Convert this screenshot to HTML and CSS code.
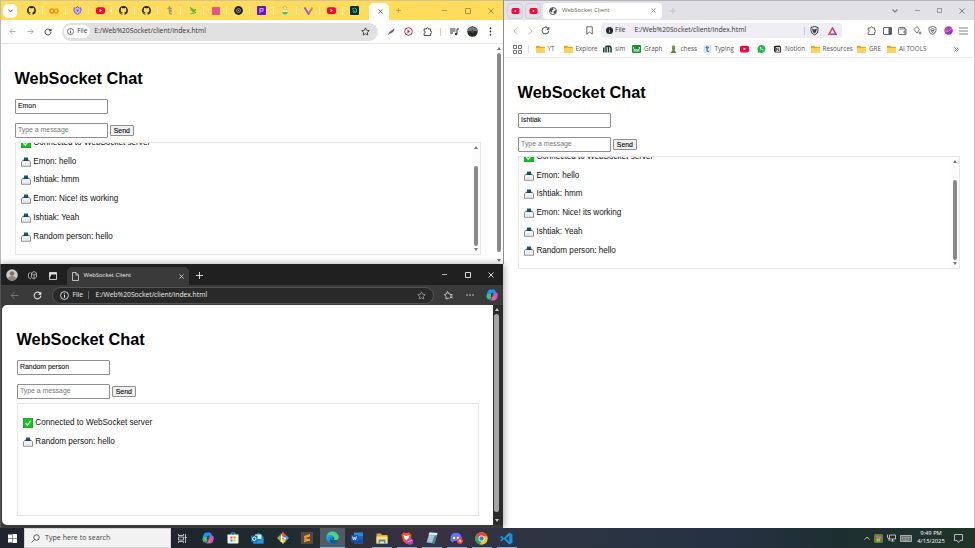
FILE: index.html
```html
<!DOCTYPE html>
<html lang="en">
<head>
<meta charset="utf-8">
<title>WebSocket Client</title>
<link rel="stylesheet" href="styles.css">
</head>
<body>
<svg class="defs" aria-hidden="true">
  <linearGradient id="g-edge" x1="0" y1="0" x2="1" y2="1"><stop offset="0" stop-color="#35c5ef"/><stop offset=".5" stop-color="#1490df"/><stop offset="1" stop-color="#0c5bb0"/></linearGradient>
  <linearGradient id="g-brave" x1="0" y1="0" x2="1" y2="0"><stop offset="0" stop-color="#ff4724"/><stop offset="1" stop-color="#8a2be2"/></linearGradient>
  <linearGradient id="g-vite" x1="0" y1="0" x2="1" y2="0"><stop offset="0" stop-color="#8d5cf6"/><stop offset=".5" stop-color="#a05ad8"/><stop offset="1" stop-color="#f29a26"/></linearGradient>
  <linearGradient id="g-orb" x1="0" y1="0" x2="1" y2="1"><stop offset="0" stop-color="#ff4d6d"/><stop offset=".5" stop-color="#a832c8"/><stop offset="1" stop-color="#5938e6"/></linearGradient>
  <symbol id="github" viewBox="0 0 16 16"><path fill="#222" fill-rule="evenodd" d="M8 0C3.6 0 0 3.6 0 8c0 3.5 2.3 6.500 5.500 7.600.4.1.5-.2.5-.4v-1.500c-2 .4-2.600-.5-2.700-.9-.1-.3-.5-.9-.8-1.100-.3-.2-.7-.6 0-.6s1.100.6 1.200.8c.7 1.200 1.900.9 2.300.7.1-.5.3-.9.500-1.100-1.800-.2-3.600-.9-3.600-4 0-.9.3-1.600.8-2.100-.1-.2-.4-1 .1-2.100 0 0 .7-.2 2.200.8a7.500 7.500 0 0 1 4 0c1.500-1 2.200-.8 2.200-.8.4 1.100.2 1.900.1 2.100.5.600.8 1.300.8 2.100 0 3.100-1.900 3.700-3.700 3.900.3.300.6.8.6 1.500v2.200c0 .2.1.5.5.4A8 8 0 0 0 8 0Z"/></symbol>
  <symbol id="youtube" viewBox="0 0 16 12"><rect width="16" height="12" rx="3.500" fill="#f03"/><path d="M6.200 3.300v5.400L11 6z" fill="#fff"/></symbol>
  <symbol id="left" viewBox="0 0 16 16"><path d="M15 8H2m6-6L2 8l6 6" fill="none" stroke="currentColor" stroke-width="1.700"/></symbol>
  <symbol id="right" viewBox="0 0 16 16"><path d="M1 8h13M8 2l6 6-6 6" fill="none" stroke="currentColor" stroke-width="1.700"/></symbol>
  <symbol id="reload" viewBox="0 0 16 16"><path d="M14 8a6 6 0 1 1-2-4.500L14 5.500" fill="none" stroke="currentColor" stroke-width="1.800"/><path d="M14.700 1v5.500H9.200z" fill="currentColor"/></symbol>
  <symbol id="info" viewBox="0 0 16 16"><circle cx="8" cy="8" r="7" fill="none" stroke="currentColor" stroke-width="1.500"/><path d="M8 7v5M8 3.800v1.800" stroke="currentColor" stroke-width="1.800"/></symbol>
  <symbol id="star" viewBox="0 0 16 16"><path d="m8 1.500 2 4.300 4.700.6-3.500 3.200.9 4.700L8 12l-4.100 2.300.9-4.700L1.300 6.400 6 5.800z" fill="none" stroke="currentColor" stroke-width="1.500"/></symbol>
  <symbol id="puzzle" viewBox="0 0 16 16"><path d="M2 3.500h4c-.4-3 4-3 3.600 0h3.900v4c3-.4 3 4 0 3.600v3.900H2v-4c2.800.3 2.800-3.900 0-3.600z" fill="none" stroke="currentColor" stroke-width="1.600"/></symbol>
  <symbol id="min" viewBox="0 0 12 12"><path d="M0 6h12" stroke="currentColor" stroke-width="1.700"/></symbol>
  <symbol id="max" viewBox="0 0 12 12"><path d="M1 1h10v10H1z" fill="none" stroke="currentColor" stroke-width="1.800"/></symbol>
  <symbol id="close" viewBox="0 0 12 12"><path d="m1 1 10 10M11 1 1 11" stroke="currentColor" stroke-width="1.800"/></symbol>
  <symbol id="plus" viewBox="0 0 12 12"><path d="M6 0v12M0 6h12" stroke="currentColor" stroke-width="1.500"/></symbol>
  <symbol id="chev" viewBox="0 0 12 8"><path d="m1 1 5 5 5-5" fill="none" stroke="currentColor" stroke-width="2.200"/></symbol>
  <symbol id="folder" viewBox="0 0 16 14"><path d="M0 2q0-1 1-1h4.500l2 2H15q1 0 1 1v9H0z" fill="#e9a820"/><path d="M0 5h16v7q0 1-1 1H1q-1 0-1-1z" fill="#ffd257"/></symbol>
  <symbol id="tray" viewBox="0 0 20 20"><path d="M3 7h14l2 3v8.500H1V10z" fill="#f5f5f5" stroke="#555" stroke-width="1.300"/><path d="M4 12.500h12M4 15h12" stroke="#ddd"/><path d="M6 1h8v7H6z" fill="#155a7c"/><path d="M5 5h10v3H5z" fill="#1a4359"/></symbol>
  <symbol id="check" viewBox="0 0 20 20"><rect x=".5" y=".5" width="19" height="19" fill="#0c1" stroke="#187018"/><path d="m5 10.500 3.500 4 7-9" fill="none" stroke="#fff" stroke-width="2.500"/></symbol>
  <symbol id="copilot" viewBox="0 0 20 20"><path d="M6 1h7q2 0 3 3l1 3h-4L9 15q-1 3-3 3Q1 18 1 12q1-10 5-11" fill="#1896e8"/><path d="M2 8q-3 8 3 8h3l2-7z" fill="#44c06b"/><path d="M14 19H7q2 0 3-3l3-8q1-2 3-2 4 0 3.500 5-1 8-5.500 8" fill="#d253c8"/><path d="M6 18h7l3-6-5 1-2 4z" fill="#ff6b52"/><path d="m9 7 3-1-2 7H8z" fill="#252b35"/></symbol>
</svg>

<main class="desktop">

<section class="window chrome">
  <div class="tabstrip">
    <div class="tabsearch"><svg width="5" height="4"><use href="#chev"/></svg></div>
    <div class="pinned"><svg width="9" height="9"><use href="#github"/></svg></div>
    <div class="pinned"><svg width="10" height="6" viewBox="0 0 20 12"><g fill="none" stroke-width="3"><circle cx="6" cy="6" r="4" stroke="#f08a00"/><circle cx="14" cy="6" r="4" stroke="#f79a10"/></g></svg></div>
    <div class="pinned"><svg width="9" height="9" viewBox="0 0 18 18"><path d="m9 1 3 3h4v5l-2 5-5 3-5-3-2-5V4h4z" fill="#bda9e8" stroke="#694bd1" stroke-width="2" stroke-dasharray="4 1"/><path d="m5 6 8 1-4 7z" fill="#6540d8" stroke="#fff"/></svg></div>
    <div class="pinned"><svg width="9" height="7"><use href="#youtube"/></svg></div>
    <div class="pinned"><svg width="9" height="9"><use href="#github"/></svg></div>
    <div class="pinned"><svg width="9" height="9"><use href="#github"/></svg></div>
    <div class="pinned"><svg width="6" height="9" viewBox="0 0 12 18"><path d="M5 0v13q0 3 5 3M1 5h9M5 10h5" fill="none" stroke="#a3987a" stroke-width="3"/></svg></div>
    <div class="pinned"><svg width="8" height="8" viewBox="0 0 16 16"><path d="m2 1 6 4-6 1m3 2 9-3-6 5 6 1-11 3" fill="none" stroke="#5bb83c" stroke-width="2.200"/></svg></div>
    <div class="pinned"><svg width="8" height="8" viewBox="0 0 16 16"><rect width="16" height="16" rx="1" fill="#ef5592"/><path d="M3 4h10M3 8h10M3 12h10" stroke="#d54781"/></svg></div>
    <div class="pinned"><svg width="9" height="9" viewBox="0 0 18 18"><circle cx="9" cy="9" r="8.800" fill="#222"/><circle cx="9" cy="9" r="4" fill="none" stroke="#aaa" stroke-width="1.500"/><circle cx="9" cy="9" r="1.500" fill="#aaa"/></svg></div>
    <div class="pinned"><svg width="9" height="9" viewBox="0 0 18 18"><rect width="18" height="18" rx="2" fill="#6510d8"/><path d="M6 15V5h6v5H7" fill="none" stroke="#c9a9ff" stroke-width="2.200"/></svg></div>
    <div class="pinned"><svg width="6" height="9" viewBox="0 0 12 18"><circle cx="6" cy="4" r="3" fill="#fff" stroke="#f29533" stroke-width="1.500"/><path d="M2 9h8v2H2z" fill="#fff6c6"/><path d="M0 12h12q-1 5-6 5t-6-5" fill="#27cba3"/></svg></div>
    <div class="pinned"><svg width="9" height="8" viewBox="0 0 18 16"><path d="m1 1 8 13L17 1" fill="none" stroke="url(#g-vite)" stroke-width="4"/></svg></div>
    <div class="pinned"><svg width="9" height="7"><use href="#youtube"/></svg></div>
    <div class="pinned last"><svg width="9" height="9" viewBox="0 0 18 18"><rect width="18" height="18" rx="2" fill="#092c28"/><path d="M4 6q5-4 9 0v6q-5 3-8-1m1-3 6 5" fill="none" stroke="#12bd8d" stroke-width="2"/></svg></div>
    <div class="activetab"><svg width="5" height="5"><use href="#close"/></svg></div>
    <div class="slot newtab"><svg width="5" height="5"><use href="#plus"/></svg></div>
    <div class="controls"><svg width="5" height="5"><use href="#min"/></svg><svg width="6" height="6"><use href="#max"/></svg><svg width="6" height="6"><use href="#close"/></svg></div>
  </div>
  <div class="toolbar">
    <div class="slot dim"><svg width="7" height="7"><use href="#left"/></svg></div>
    <div class="slot dim"><svg width="7" height="7"><use href="#right"/></svg></div>
    <div class="slot"><svg width="8" height="8"><use href="#reload"/></svg></div>
    <div class="omnibox">
      <span class="chip"><svg width="7" height="7"><use href="#info"/></svg>File</span>
      <span class="url">E:/Web%20Socket/client/index.html</span>
      <svg class="end" width="9" height="9"><use href="#star"/></svg>
    </div>
    <div class="slot"><svg width="8" height="8" viewBox="0 0 16 16"><path d="M1 15Q4 6 15 1q0 7-9 10z" fill="#8448b8"/></svg></div>
    <div class="slot"><svg width="9" height="9" viewBox="0 0 18 18"><circle cx="9" cy="9" r="7.700" fill="none" stroke="#c92c52" stroke-width="2"/><path d="M7 5v8l5-4z" fill="#c91c46"/></svg></div>
    <div class="slot"><svg width="9" height="9"><use href="#puzzle"/></svg></div>
    <i class="divider"></i>
    <div class="slot"><svg width="9" height="8" viewBox="0 0 18 16"><path d="M0 2h11M0 6h11M0 10h6M14 12V2h4" fill="none" stroke="#333" stroke-width="2"/><circle cx="12" cy="12" r="2.500" fill="#333"/></svg></div>
    <div class="slot"><svg width="11" height="11" viewBox="0 0 22 22"><circle cx="11" cy="11" r="10.500" fill="#303337"/><path d="M2 6q8-8 17 0l1 4H2" fill="#777985"/><path d="M2 14q9-4 18 0-6 9-14 5" fill="#1d2b1b"/><path d="M9 7h4v6H9z" fill="#654a49"/></svg></div>
    <div class="slot"><svg width="3" height="9" viewBox="0 0 3 9"><g fill="#333"><circle cx="1.500" cy="1.200" r=".9"/><circle cx="1.500" cy="4.500" r=".9"/><circle cx="1.500" cy="7.800" r=".9"/></g></svg></div>
  </div>
  <div class="viewport">
    <div class="page">
      <h1>WebSocket Chat</h1>
      <div class="field">Emon</div>
      <div class="compose"><div class="field hint">Type a message</div><button>Send</button></div>
      <div class="log scrolled">
        <div class="messages">
          <p><svg><use href="#check"/></svg>Connected to WebSocket server</p>
          <p><svg><use href="#tray"/></svg>Emon: hello</p>
          <p><svg><use href="#tray"/></svg>Ishtiak: hmm</p>
          <p><svg><use href="#tray"/></svg>Emon: Nice! its working</p>
          <p><svg><use href="#tray"/></svg>Ishtiak: Yeah</p>
          <p><svg><use href="#tray"/></svg>Random person: hello</p>
        </div>
        <div class="scroll inner"><i class="up"></i><b></b><i class="down"></i></div>
      </div>
    </div>
    <div class="scroll outer"><i class="up"></i><b></b><i class="down"></i></div>
  </div>
</section>

<section class="window brave">
  <div class="tabstrip">
    <div class="minitab"><svg width="9" height="6"><use href="#youtube"/></svg></div>
    <div class="minitab"><svg width="9" height="6"><use href="#youtube"/></svg></div>
    <div class="tab">
      <svg width="8" height="8" viewBox="0 0 16 16"><circle cx="8" cy="8" r="7" fill="#fff" stroke="#4b4e55" stroke-width="1.800"/><path d="M2 4q4-3 6-2l1 3-3 2 1 3-2 1-3-3M9 9l5-3v5l-4 3z" fill="#4b4e55"/></svg>
      <span>WebSocket Client</span><svg class="end" width="5" height="5"><use href="#close"/></svg>
    </div>
    <div class="slot newtab"><svg width="6" height="6"><use href="#plus"/></svg></div>
    <div class="controls"><svg width="6" height="4"><use href="#chev"/></svg><svg width="5" height="5"><use href="#min"/></svg><svg width="5" height="5"><use href="#max"/></svg><svg width="6" height="6"><use href="#close"/></svg></div>
  </div>
  <div class="toolbar">
    <div class="nav dim"><svg width="5" height="8" viewBox="0 0 8 14"><path d="M7 1 1 7l6 6" fill="none" stroke="currentColor" stroke-width="1.500"/></svg></div>
    <div class="nav dim"><svg width="5" height="8" viewBox="0 0 8 14"><path d="m1 1 6 6-6 6" fill="none" stroke="currentColor" stroke-width="1.500"/></svg></div>
    <div class="nav"><svg width="9" height="9"><use href="#reload"/></svg></div>
    <div class="bookmark"><svg width="7" height="9" viewBox="0 0 14 18"><path d="M1.500 1.500h11v15L7 12l-5.500 4.500z" fill="none" stroke="#555961" stroke-width="1.800"/></svg></div>
    <div class="omnibox">
      <svg width="7" height="7" viewBox="0 0 14 14"><circle cx="7" cy="7" r="7" fill="#25282e"/><path d="M7 6v5M7 3v1.500" stroke="#ddd" stroke-width="1.500"/></svg>
      <span class="file">File</span><span class="url">E:/Web%20Socket/client/index.html</span>
      <i class="divider"></i>
      <svg width="9" height="10" viewBox="0 0 18 20"><path d="m9 1 7 2v6q0 6-7 9-7-3-7-9V3z" fill="none" stroke="#383d49" stroke-width="2"/><path d="m4 5 5 2 5-2-2 7-3 3-3-3z" fill="#383d49"/></svg>
      <svg class="triangle" width="9" height="8" viewBox="0 0 18 16"><path d="M9 2 16 14.500H2z" fill="none" stroke="url(#g-brave)" stroke-width="3"/></svg>
    </div>
    <div class="tools">
      <svg width="9" height="9"><use href="#puzzle"/></svg>
      <svg width="9" height="8" viewBox="0 0 18 16"><rect x="1" y="1" width="16" height="14" rx="1" fill="none" stroke="#555961" stroke-width="1.800"/><path d="M11 1h6v14h-6z" fill="#555961"/></svg>
      <svg width="9" height="8" viewBox="0 0 18 16"><path d="M13 4V1H3Q1 1 1 3v10q0 2 2 2h13V4H3M16 8h-4v4h4" fill="none" stroke="#555961" stroke-width="1.700"/></svg>
      <svg width="9" height="9" viewBox="0 0 18 18"><path d="m8 1 5 6-5 7-6-7zM14 11v6m-3-3h6" fill="none" stroke="#555961" stroke-width="1.700"/></svg>
      <svg width="9" height="9" viewBox="0 0 18 18"><path d="m9 1 7 2v6q-1 6-7 8-6-2-7-8V3z" fill="none" stroke="#555961" stroke-width="1.700"/><path d="m5 7 4-2 4 2-4 6zM6 9h6" fill="none" stroke="#555961" stroke-width="1.500"/></svg>
      <svg width="9" height="9" viewBox="0 0 18 18"><circle cx="9" cy="9" r="8.500" fill="url(#g-orb)"/><path d="M2 10q7 3 14-5" fill="none" stroke="#efb2ed" stroke-width="1.500"/></svg>
      <svg width="9" height="8" viewBox="0 0 18 16"><path d="M0 2h18M0 8h18M0 14h18" stroke="#555961" stroke-width="1.500"/></svg>
    </div>
  </div>
  <div class="bookmarks">
    <svg class="apps" width="9" height="9" viewBox="0 0 18 18"><path d="M1 1h6v6H1zM11 1h6v6h-6zM1 11h6v6H1zM11 11h6v6h-6z" fill="none" stroke="#555961" stroke-width="1.700"/></svg>
    <i class="divider"></i>
    <span class="bm b-yt"><svg><use href="#folder"/></svg>YT</span>
    <span class="bm b-explore"><svg><use href="#folder"/></svg>Explore</span>
    <span class="bm b-sim"><svg viewBox="0 0 18 16"><path d="M1.500 15V5M6 15V3q4-2 5 2v10M16 15V6q0-4-5-4" fill="none" stroke="#153c31" stroke-width="3"/></svg>sim</span>
    <span class="bm b-graph"><svg viewBox="0 0 18 16"><rect width="18" height="16" rx="2" fill="#139630"/><path d="M3 4q0 8 6 5 6 4 6-5M3 12h12" fill="none" stroke="#fff" stroke-width="1.800"/></svg>Graph</span>
    <span class="bm b-chess"><svg viewBox="0 0 18 16"><circle cx="9" cy="4" r="3.500" fill="#69a43c"/><path d="M6 6h6l-1 5 4 5H3l4-5z" fill="#538b31"/></svg>chess</span>
    <span class="bm b-typing"><svg viewBox="0 0 18 16"><path d="M1 0h16v16H1z" fill="#dfe3e8"/><path d="M8 2v9q0 2 4 2M5 5h7" fill="none" stroke="#2489d1" stroke-width="2.500"/></svg>Typing</span>
    <span class="bm b-tube"><svg><use href="#youtube"/></svg></span>
    <span class="bm b-phone"><svg viewBox="0 0 16 16"><path d="M8 0a8 8 0 1 1-4 15l-4 1 1-4A8 8 0 0 1 8 0" fill="#21b84b"/><path d="M5 4q0 6 6 7l1-2-2-1-1 1-2-2 1-1-1-2z" fill="#fff"/></svg></span>
    <span class="bm b-notion"><svg viewBox="0 0 18 18"><path d="m1 2 12-1 4 3v13H4l-3-3z" fill="#222"/><path d="M5 5h10v10H5z" fill="#fff"/><path d="M7 13V7l5 6V7" fill="none" stroke="#222" stroke-width="1.800"/></svg>Notion</span>
    <span class="bm b-res"><svg><use href="#folder"/></svg>Resources</span>
    <span class="bm b-gre"><svg><use href="#folder"/></svg>GRE</span>
    <span class="bm b-ai"><svg><use href="#folder"/></svg>AI TOOLS</span>
    <svg class="more" width="5" height="5" viewBox="0 0 10 10"><path d="m1 1 3.500 4L1 9m4.500-8L9 5 5.500 9" fill="none" stroke="#444" stroke-width="1.600"/></svg>
  </div>
  <div class="viewport">
    <div class="page">
      <h1>WebSocket Chat</h1>
      <div class="field">Ishtiak</div>
      <div class="compose"><div class="field hint">Type a message</div><button>Send</button></div>
      <div class="log scrolled">
        <div class="messages">
          <p><svg><use href="#check"/></svg>Connected to WebSocket server</p>
          <p><svg><use href="#tray"/></svg>Emon: hello</p>
          <p><svg><use href="#tray"/></svg>Ishtiak: hmm</p>
          <p><svg><use href="#tray"/></svg>Emon: Nice! its working</p>
          <p><svg><use href="#tray"/></svg>Ishtiak: Yeah</p>
          <p><svg><use href="#tray"/></svg>Random person: hello</p>
        </div>
        <div class="scroll inner"><i class="up"></i><b></b><i class="down"></i></div>
      </div>
    </div>
  </div>
</section>

<section class="window edge">
  <div class="tabstrip">
    <svg class="avatar" width="12" height="12" viewBox="0 0 24 24"><circle cx="12" cy="12" r="11.500" fill="#cfc9c6"/><circle cx="12" cy="9" r="4.500" fill="#77716e"/><path d="M4 20q1-6 8-6t8 6q-8 6-16 0" fill="#8b8581"/></svg>
    <svg class="spaces" width="9" height="9" viewBox="0 0 18 18"><path d="m7 4 5-3 5 3v8l-5 4-5-3zM7 5l5 3 5-3M12 8v7M5 3 1 5v8l5 3" fill="none" stroke="#bbb" stroke-width="1.700"/></svg>
    <svg class="tabmenu" width="8" height="8" viewBox="0 0 16 16"><path d="M1 1h14v14H1z" fill="none" stroke="#ddd" stroke-width="1.800"/><path d="M1 1h14v4H1zM1 5h3v4H1z" fill="#ddd"/></svg>
    <div class="tab">
      <svg width="7" height="9" viewBox="0 0 14 18"><path d="M1 1h7l5 5v11H1zM8 1v5h5" fill="none" stroke="#ddd" stroke-width="1.600"/></svg>
      <span>WebSocket Client</span><svg class="end" width="5" height="5"><use href="#close"/></svg>
    </div>
    <div class="slot newtab"><svg width="7" height="7"><use href="#plus"/></svg></div>
    <div class="controls"><svg width="5" height="5"><use href="#min"/></svg><svg width="6" height="6"><use href="#max"/></svg><svg width="6" height="6"><use href="#close"/></svg></div>
  </div>
  <div class="toolbar">
    <div class="nav dim"><svg width="9" height="9"><use href="#left"/></svg></div>
    <div class="nav"><svg width="9" height="9"><use href="#reload"/></svg></div>
    <div class="omnibox">
      <svg width="9" height="9"><use href="#info"/></svg><span class="file">File</span><i class="divider"></i>
      <span class="url">E:/Web%20Socket/client/index.html</span><svg class="end" width="9" height="9"><use href="#star"/></svg>
    </div>
    <svg class="fav" width="9" height="9" viewBox="0 0 18 18"><path d="M12 6 9 5 7 1 5 6 1 7l3 4v5l5-2 2 2M12 7h5m-5 3h5m-5 3h5" fill="none" stroke="#ddd" stroke-width="1.700"/></svg>
    <svg class="dots" width="8" height="2" viewBox="0 0 16 4"><g fill="#ddd"><circle cx="2" cy="2" r="1.500"/><circle cx="8" cy="2" r="1.500"/><circle cx="14" cy="2" r="1.500"/></g></svg>
    <svg class="pilot" width="12" height="12"><use href="#copilot"/></svg>
  </div>
  <div class="viewport">
    <div class="page">
      <h1>WebSocket Chat</h1>
      <div class="field">Random person</div>
      <div class="compose"><div class="field hint">Type a message</div><button>Send</button></div>
      <div class="log">
        <div class="messages">
          <p><svg><use href="#check"/></svg>Connected to WebSocket server</p>
          <p><svg><use href="#tray"/></svg>Random person: hello</p>
        </div>
      </div>
    </div>
    <div class="scroll outer"><i class="up"></i><b></b><i class="down"></i></div>
  </div>
</section>

<footer class="taskbar">
  <div class="start"><svg width="9" height="9" viewBox="0 0 18 18"><path d="M0 1h8v7H0zM9 0h9v8H9zM0 9h8v8H0zM9 9h9v9H9z" fill="#fff"/></svg></div>
  <div class="search"><svg width="9" height="9" viewBox="0 0 18 18"><circle cx="11" cy="7" r="5.500" fill="none" stroke="#333" stroke-width="1.600"/><path d="m7 11-6 6" stroke="#333" stroke-width="1.600"/></svg>Type here to search</div>
  <div class="app"><svg width="9" height="9" viewBox="0 0 18 18"><path d="M1 0v3h10V0M1 18v-3h10v3M1 6h10v6H1zM15 0v18M13 7h5" fill="none" stroke="#ddd" stroke-width="1.600"/></svg></div>
  <div class="app"><svg width="12" height="12"><use href="#copilot"/></svg></div>
  <div class="app"><svg width="12" height="12" viewBox="0 0 24 24"><path d="M8 6V2h8v4" fill="none" stroke="#27a5e5" stroke-width="2"/><path d="M1 5h22v16q0 2-2 2H3q-2 0-2-2z" fill="#f4f4f4"/><path d="M7 9h4v4H7z" fill="#f25022"/><path d="M13 9h4v4h-4z" fill="#7fba00"/><path d="M7 15h4v4H7z" fill="#00a4ef"/><path d="M13 15h4v4h-4z" fill="#ffb900"/></svg></div>
  <div class="app"><svg width="13" height="12" viewBox="0 0 26 24"><path d="m4 9 11-8 10 8v14H4z" fill="#1275c5"/><path d="M8 5h13v9H8z" fill="#d8efff"/><path d="m5 12 10 5 10-6v12H5z" fill="#2495dd"/><rect y="7" width="13" height="13" rx="1" fill="#0872c8"/><circle cx="6.500" cy="13.500" r="3.500" fill="none" stroke="#fff" stroke-width="2"/></svg></div>
  <div class="app"><svg width="12" height="12" viewBox="0 0 24 24"><path d="m12 0 6 6-6 6-6-6z" fill="#ed5748"/><path d="m18 6 6 6-6 6-6-6z" fill="#5b91cc"/><path d="m6 6 6 6-6 6-6-6z" fill="#80b957"/><path d="m12 12 6 6-6 6-6-6z" fill="#e9c949"/><path d="M9 5v14M9 9l7 4" stroke="#fff" stroke-width="2"/><circle cx="9" cy="18" r="2" fill="#fff"/><circle cx="16" cy="13" r="2" fill="#fff"/></svg></div>
  <div class="app"><svg width="12" height="12" viewBox="0 0 24 24"><path d="M0 0h24v24H0z" fill="#4d4b4b"/><path d="m18 4-12 4v5l12-4zM6 11l12 4v4L6 15zM6 17l12-4v3L6 21z" fill="#ff9d17"/></svg></div>
  <div class="app focused"><svg width="13" height="13" viewBox="0 0 24 24"><circle cx="12" cy="12" r="11.500" fill="url(#g-edge)"/><path d="M2 8Q8-2 18 3q9 6 4 12-4 3-8 1 3-2 0-6-5-5-12-2" fill="#50d477"/><path d="M10 11q-2 8 7 9l4-1q-5 7-12 3-5-5 1-11" fill="#075b9e"/><path d="M13 11q3 2 1 5 4 3 8 0-1 3-5 4-7-2-4-9" fill="#30455a"/></svg></div>
  <div class="app"><svg width="12" height="12" viewBox="0 0 24 24"><rect x="6" y="1" width="18" height="22" rx="1" fill="#2d8ade"/><path d="M6 8h18v7H6z" fill="#1862b6"/><path d="M6 15h18v8H6z" fill="#174b9a"/><rect y="6" width="14" height="13" fill="#1957b8"/><path d="m3 9 2 7 2-6 2 6 2-7" fill="none" stroke="#fff" stroke-width="1.600"/></svg></div>
  <div class="app running"><svg width="12" height="11" viewBox="0 0 24 22"><path d="M1 1h9l2 3h11v17H1z" fill="#e8a92e"/><path d="M1 7h22v14H1z" fill="#ffe083"/><path d="M5 21v-8h14v8h-3v-4H8v4z" fill="#458fc8"/></svg></div>
  <div class="app running"><svg width="12" height="13" viewBox="0 0 24 26"><path d="m5 1 5 1 6-1 5 5-2 12-8 6-7-6L1 5z" fill="#ff4b24"/><path d="m5 6 6 2 6-2-2 7-4 4-4-4z" fill="#fff"/><circle cx="18" cy="19" r="6.500" fill="#b647c9"/><path d="m13 20 9-4" stroke="#ff8dc1" stroke-width="2"/></svg></div>
  <div class="app running"><svg width="12" height="12" viewBox="0 0 24 24"><path d="m7 1 16 1-6 21-16-2z" fill="#8dbec8"/><path d="m7 1 16 1-1 4L5 5z" fill="#e5eef0"/><path d="m17 8-5 14 5 1 5-17z" fill="#557e86"/><path d="m6 8 9 1M5 12l9 1M4 16l9 1" stroke="#d6eef1"/></svg></div>
  <div class="app running"><svg width="13" height="12" viewBox="0 0 26 24"><path d="M4 4q8-5 16 0 5 7 4 14l-5 3-3-3H8l-3 3-4-3Q0 10 4 4" fill="#6672f3"/><circle cx="8" cy="12" r="2.500" fill="#fff"/><circle cx="16" cy="12" r="2.500" fill="#fff"/><circle cx="20" cy="18" r="6" fill="#e9414a"/><path d="M17 18h6m-3-3v6" stroke="#fff" stroke-width="1.500"/></svg></div>
  <div class="app running"><svg width="13" height="13" viewBox="0 0 24 24"><circle cx="12" cy="12" r="11.500" fill="#fbc51b"/><path d="M2 6Q6 .5 12 .5T22 6l.5 2H12l-5 7z" fill="#e94335"/><path d="m2 6 6 9 4 2-3 6Q-3 18 2 6" fill="#2fa650"/><circle cx="12" cy="12" r="5.500" fill="#fff"/><circle cx="12" cy="12" r="4.200" fill="#367ce8"/></svg></div>
  <div class="app running"><svg width="13" height="13" viewBox="0 0 24 24"><path d="m17 1 6 3v16l-6 3L7 13l-4 4-3-2 4-3-4-3 3-2 4 4zM17 7l-6 5 6 5z" fill="#1793df" fill-rule="evenodd"/></svg></div>
  <div class="systray">
    <svg width="6" height="4" viewBox="0 0 12 8"><path d="m1 7 5-5 5 5" fill="none" stroke="#ddd" stroke-width="1.600"/></svg>
    <svg width="9" height="9" viewBox="0 0 18 18"><rect width="18" height="18" rx="3" fill="#687e2d"/><path d="M4 3h6v6H4z" fill="#d85f77"/><path d="M10 5h5v6h-5z" fill="#a968d4"/><path d="M5 9h7v6H5z" fill="#8ac75c"/></svg>
    <svg width="9" height="8" viewBox="0 0 18 16"><path d="M5 2h12v8H5zM11 10v4M7 14h8M1 1v5q0 3 3 3v5" fill="none" stroke="#ddd" stroke-width="1.600"/></svg>
    <svg width="12" height="7" viewBox="0 0 24 14"><path d="M1 1h22v12H1z" fill="#69736e" stroke="#c5ccc7" stroke-width="1.500"/><path d="M4 5h16M4 8h16M7 11h10" stroke="#ddd" stroke-dasharray="2 1"/></svg>
    <div class="clock"><span>9:49 PM</span><span>4/13/2025</span></div>
    <svg width="9" height="9" viewBox="0 0 18 18"><path d="M1 1h16v12h-5l-3 4-3-4H1z" fill="none" stroke="#ddd" stroke-width="1.600"/></svg>
  </div>
</footer>
</main>
</body>
</html>
```
FILE: styles.css
```css
* { box-sizing: border-box; }
html, body { margin: 0; }
body { width: 975px; height: 548px; overflow: hidden; font-family: "Open Sans", "Noto Sans", sans-serif; font-size: 6.6px; line-height: 1; color: #333; }
svg { display: block; flex: none; }
.defs { position: absolute; width: 0; height: 0; }
.desktop { position: relative; width: 975px; height: 548px; background: #fff; overflow: hidden; }
.window { position: absolute; display: flex; flex-direction: column; background: #fff; }
.tabstrip, .toolbar, .bookmarks, .omnibox, .tab, .chip { display: flex; align-items: center; flex: none; white-space: nowrap; }
.slot { display: flex; justify-content: center; align-items: center; flex: none; }
.end { margin-left: auto; }
.controls { display: flex; align-items: center; margin-left: auto; }
.dim { color: #999; }
.url { flex: none; font-size: 6.750px; }

/* Page shown in every browser */
.viewport { display: flex; flex: 1; min-height: 0; background: #fff; }
.page { flex: 1; min-width: 0; font-family: "Liberation Sans", Arial, sans-serif; font-size: 8.13px; color: #111; }
h1 { margin: 0 0 11px; font-size: 16.3px; line-height: 20px; color: #000; }
.field { display: flex; align-items: center; width: 93px; height: 15px; padding-left: 2.500px; border: 1px solid #8f8f8f; border-radius: 1px; background: #fff; font-size: 6.9px; -webkit-text-stroke: .1px currentColor; }
.hint { color: #777; -webkit-text-stroke: 0; }
.compose { display: flex; align-items: center; gap: 2px; margin: 8.500px 0 4.400px; }
button { width: 24.500px; height: 11px; margin: 0; padding: 0; border: 1px solid #8f8f8f; border-radius: 1px; background: #efefef; font: 6.9px/9px "Liberation Sans", Arial, sans-serif; color: #000; -webkit-text-stroke: .1px currentColor; }
.log { display: flex; height: 113px; border: 1px solid #e8e8e8; overflow: hidden; }
.messages { flex: 1; padding: 9.500px 0 0 5.300px; }
.scrolled .messages { padding-top: 0; margin-top: -9.500px; }
.messages p { display: flex; align-items: center; gap: 2.500px; height: 18.8px; margin: 0; white-space: nowrap; }
.messages svg { width: 10px; height: 10px; }
.scroll { display: flex; flex-direction: column; align-items: center; flex: none; }
.scroll b { width: 4.5px; flex: 1; border-radius: 3px; background: #898989; }
.scroll i { width: 0; height: 0; border: 2.500px solid transparent; }
.scroll .up { border-top: 0; border-bottom: 3px solid #777; }
.scroll .down { border-bottom: 0; border-top: 3px solid #777; }
.inner { width: 8px; padding: 3px 0 3px; background: #fcfcfc; }
.inner b { margin: 17px 0 2px; }

/* Chrome */
.chrome { left: 0; top: 0; width: 504px; height: 264px; border-left: 1px solid #bbb; border-right: 1px solid #8f8f8f; }
.chrome .tabstrip { height: 20px; border-top: 1px solid #d5c68d; background: #ffdc5c; }
.tabsearch { display: flex; align-items: center; justify-content: center; width: 14px; height: 14px; margin: 0 2.500px 0 2px; border-radius: 5px; background: #fff; }
.pinned { display: flex; align-items: center; justify-content: center; position: relative; width: 23.100px; height: 18px; flex: none; }
.pinned::after { content: ""; position: absolute; right: 0; width: 1px; height: 8px; background: #fff2c0; }
.pinned.last::after { display: none; }
.activetab { display: flex; align-items: center; justify-content: center; width: 20px; height: 17px; margin-left: 3px; align-self: flex-end; padding-left: 3px; border-radius: 5px 5px 0 0; background: #fff; }
.chrome .newtab { width: 20px; color: #a08a3a; }
.chrome .controls { gap: 17.500px; margin-right: 9px; color: #a08a3a; }
.chrome .toolbar { height: 24px; padding-left: 2px; border-bottom: 1px solid #e5e5e5; }
.chrome .toolbar .slot { width: 18.100px; }
.chrome .omnibox { width: 316px; height: 18px; margin: 0 3.500px 0 5px; padding: 0 8px 0 2px; border-radius: 9px; background: #e1e1e1; }
.chip { gap: 3px; width: 26px; height: 13px; margin-right: 4px; padding-left: 3px; border-radius: 7px; background: #fff; font-size: 6.300px; }
.chrome .divider { width: 1px; height: 8px; margin: 0 4px; background: #f3d573; }
.chrome .page { padding: 24px 14px 0 13.500px; }
.outer { width: 8px; padding: 3px 0 2px; }
.outer b { margin: 3px 0 7px; }

/* Brave */
.brave { left: 504px; top: 0; width: 471px; height: 528px; border-right: 1px solid #c4c4c8; }
.brave .tabstrip { height: 20px; padding-left: 3px; border-top: 1px solid #b4b4ba; background: #e2e1e8; }
.minitab { display: flex; align-items: center; justify-content: center; width: 16px; height: 16px; margin-right: 2px; border: 1px solid #d2d1d9; border-radius: 4px; }
.brave .tab { width: 119px; height: 16px; padding: 0 6px; gap: 5px; border-radius: 4px; background: #fff; font-size: 5.900px; color: #666; }
.brave .newtab { width: 21px; color: #bbb; }
.brave .controls { gap: 17px; margin-right: 9px; color: #77777e; }
.brave .toolbar { height: 21px; padding-left: 4px; color: #555961; }
.brave .toolbar .dim { color: #aaa; }
.brave .omnibox { color: #333; }
.nav { display: flex; align-items: center; justify-content: center; width: 15px; }
.bookmark { margin: 0 8px 0 32.500px; }
.brave .omnibox { width: 241px; height: 15px; padding-left: 5px; border-radius: 4px; background: #efeef4; }
.brave .file { margin: 0 9px 0 2.500px; }
.brave .omnibox .divider { width: 1px; height: 8px; margin: 0 5px 0 auto; background: #c5c5cc; }
.triangle { margin: 0 5px 0 9px; }
.tools { display: flex; align-items: center; gap: 6.300px; margin: 0 6px 0 auto; }
.brave .bookmarks { height: 17px; padding-left: 8.500px; border-bottom: 1px solid #eee; font-size: 6.300px; color: #555; }
.bookmarks .divider { width: 1px; height: 8px; margin: 0 7px 0 6px; background: #ddd; }
.bm { display: flex; align-items: center; gap: 3px; flex: none; }
.bm svg { width: 9px; height: 8px; }
.b-yt { width: 28px; }
.b-explore { width: 39.500px; }
.b-sim { width: 29px; }
.b-graph { width: 36.500px; }
.b-chess { width: 34px; }
.b-typing { width: 37px; }
.b-tube { width: 17px; }
.b-phone { width: 16.500px; }
.b-notion { width: 37.500px; }
.b-res { width: 46.500px; }
.b-gre { width: 30px; }
.bookmarks .more { margin: 0 15px 0 auto; }
.brave .page { padding: 24px 14px 0 13.600px; }

/* Edge */
.edge { left: 0; top: 264px; width: 503px; height: 264px; border-left: 1px solid #555; background: #3a3a3a; color: #eee; box-shadow: 1px 0 7px rgba(0,0,0,.35); }
.edge .tabstrip { height: 21px; padding-left: 5px; background: #202020; }
.spaces { margin: 2px 12px 0 9.500px; }
.tabmenu { margin: 2px 10px 0 0; }
.edge .tab { width: 122px; height: 18px; align-self: flex-end; padding: 0 5px 0 5px; gap: 5px; border-radius: 5px 5px 0 0; background: #3a3a3a; font-size: 5.900px; }
.edge .newtab { width: 22px; padding-top: 2px; }
.edge .controls { gap: 17.500px; margin-right: 9px; }
.edge .toolbar { height: 20px; padding-left: 2px; }
.edge .dim { color: #777; }
.edge .nav { width: 23px; }
.edge .nav + .nav { padding-right: 1px; }
.edge .omnibox { width: 382px; height: 17px; margin-left: 3px; padding: 0 7px 0 6.500px; border: 1px solid #555; border-radius: 9px; background: #292929; }
.edge .file { margin: 0 5px 0 4px; }
.edge .omnibox .divider { width: 1px; height: 8px; margin-right: 6.500px; background: #666; }
.edge .omnibox .end { color: #999; }
.fav { margin-left: 9.500px; }
.dots { margin-left: 13.500px; }
.pilot { margin-left: 11.500px; }
.edge .viewport { flex: none; height: 220px; margin-left: 1px; background: #2c2c2c; border-radius: 5px 0 0 5px; }
.edge .page { flex: none; width: 491px; padding: 24px 14px 0 14.500px; border-radius: 5px 0 0 5px; background: #fff; }
.edge .outer { width: 7px; padding: 3px 0 3px; }
.edge .outer b { background: #a5a5a5; margin-bottom: 7px; }
.edge .outer .up { border-bottom-color: #ccc; }
.edge .outer .down { border-top-color: #ccc; }

/* Taskbar */
.taskbar { position: absolute; left: 0; top: 528px; display: flex; align-items: center; width: 975px; height: 20px; background: linear-gradient(90deg, #20242e 0 17%, #1f2b2e 29%, #30303a 38%, #393044 44%, #2e3442 53%, #243243 75%, #1d2e30 86%, #20342a); }
.start { display: flex; justify-content: center; width: 24px; }
.search { display: flex; align-items: center; gap: 5px; width: 146.500px; height: 20px; padding-left: 6px; border: 1px solid #d5d5d5; background: #f2f2f2; font-size: 7.100px; color: #444; }
.app { display: flex; align-items: center; justify-content: center; width: 24.900px; height: 20px; flex: none; }
.running { background: linear-gradient(#75b4e8, #75b4e8) center bottom / 20px 1px no-repeat; }
.focused { border-bottom: 1px solid #75b4e8; background: #505b63; }
.systray { display: flex; align-items: center; gap: 4px; margin: 0 12px 0 auto; }
.clock { display: flex; flex-direction: column; align-items: center; gap: 1.500px; width: 28px; margin: 0 4px 0 1px; color: #fff; font-size: 5.800px; white-space: nowrap; }
.clock + svg { margin-left: 1px; }
```
